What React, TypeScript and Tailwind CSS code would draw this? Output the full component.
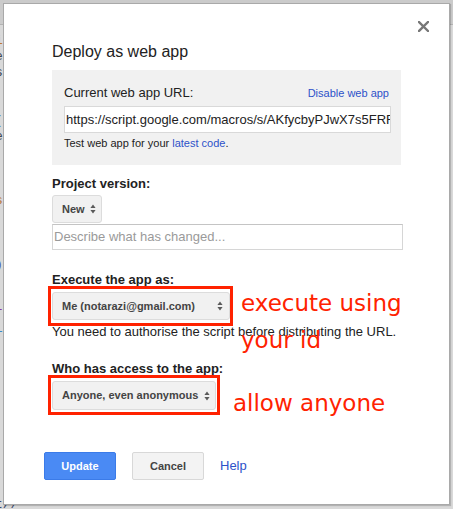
import React from "react";

const Arrows = () => (
  <svg width="6" height="10" viewBox="0 0 6 10" className="shrink-0">
    <path d="M3 0.5L5.6 4H0.4z M0.4 6H5.6L3 9.5z" fill="#5a5a5a" />
  </svg>
);

const codeLines: { t: string; c: string }[] = [
  { t: "i", c: "text-[#c0782e]" },
  { t: "e", c: "text-[#3a4450]" },
  { t: "s", c: "text-[#3a4450]" },
  { t: "", c: "" },
  { t: "", c: "" },
  { t: "(", c: "text-[#3a5a9a]" },
  { t: "e", c: "text-[#3a4450]" },
  { t: "", c: "" },
  { t: "", c: "" },
  { t: "", c: "" },
  { t: "s", c: "text-[#b8763a]" },
  { t: "", c: "" },
  { t: "", c: "" },
  { t: "", c: "" },
  { t: ")", c: "text-[#4a4aa8]" },
  { t: "", c: "" },
  { t: "", c: "" },
  { t: "r", c: "text-[#8a3aa8]" },
  { t: "L", c: "text-[#3a8ac8]" },
  { t: "", c: "" },
  { t: "", c: "" },
  { t: "", c: "" },
  { t: "", c: "" },
  { t: "", c: "" },
  { t: "", c: "" },
  { t: "", c: "" },
  { t: "", c: "" },
  { t: "", c: "" },
  { t: "", c: "" },
  { t: "t//", c: "text-[#3a4a70]" },
];

export default function App() {
  return (
    <div className="relative w-[453px] h-[509px] overflow-hidden bg-[#d9d9d9] font-['Liberation_Sans',Arial,sans-serif]">
      {/* page behind the dialog */}
      <div className="flex flex-col">
        <div className="h-[25px] bg-[#cbcbcb] border-b border-[#b3b3b3]" />
        <div className="flex flex-col pt-[8px] font-['Liberation_Mono',monospace] text-[13px] leading-[16px]">
          {codeLines.map((l, i) => (
            <div key={i} className={`h-[16px] -ml-[5px] whitespace-pre ${l.c}`}>
              {l.t}
            </div>
          ))}
        </div>
      </div>

      {/* dialog */}
      <div className="absolute left-[3px] top-[3px] w-[447px] h-[502px] bg-white border border-[#a9a9a9] shadow-[1px_1px_1px_rgba(0,0,0,0.18)] pl-[48px] pr-[46px] pt-[38px] text-[#222]">
        {/* close */}
        <svg
          className="absolute right-[20px] top-[17px]"
          width="11"
          height="11"
          viewBox="0 0 11 11"
        >
          <path d="M1 1L10 10M10 1L1 10" stroke="#777" strokeWidth="2.4" strokeLinecap="square" />
        </svg>

        <div className="text-[16px] leading-[20px] text-[#222]">Deploy as web app</div>

        <div className="mt-[8px] w-[349px] bg-[#f1f1f1] pl-[12px] pr-[12px] pt-[15px] pb-[15px]">
          <div className="flex items-baseline justify-between">
            <span className="text-[13px] leading-[15px] text-[#222]">Current web app URL:</span>
            <span className="text-[11px] leading-[15px] text-[#2d52c9]">Disable web app</span>
          </div>
          <div className="mt-[5px] w-[327px] h-[27px] bg-white border border-[#d9d9d9] pl-[1px] flex items-center overflow-hidden">
            <span className="text-[13px] whitespace-nowrap text-[#222]">
              https://script.google.com/macros/s/AKfycbyPJwX7s5FRRq0
            </span>
          </div>
          <div className="mt-[3px] text-[11px] leading-[14px] text-[#222]">
            Test web app for your <span className="text-[#2d52c9]">latest code</span>.
          </div>
        </div>

        <div className="mt-[11px] text-[13px] leading-[15px] font-bold text-[#222]">Project version:</div>
        <div className="mt-[4px] inline-flex h-[28px] items-center gap-[5px] pl-[9px] pr-[5px] bg-[#f1f1f1] border border-[#dcdcdc] rounded-[3px]">
          <span className="text-[11px] font-bold text-[#444]">New</span>
          <Arrows />
        </div>
        <div className="mt-[1px] w-[351px] h-[26px] border border-[#d6d6d6] border-t-[#c4c4c4] pl-[1px] flex items-center">
          <span className="text-[13px] text-[#9a9a9a]">Describe what has changed...</span>
        </div>

        <div className="mt-[22px] text-[13px] leading-[15px] font-bold text-[#222]">Execute the app as:</div>
        <div className="relative mt-[5px] w-[178px]">
          <div className="h-[28px] flex items-center justify-between pl-[9px] pr-[6px] bg-[#f1f1f1] border border-[#dcdcdc] rounded-[3px]">
            <span className="text-[11px] font-bold text-[#444]">Me (notarazi@gmail.com)</span>
            <Arrows />
          </div>
          <div className="absolute -left-[4px] -top-[6px] -right-[3px] -bottom-[6px] border-[3px] border-[#ff2200]" />
        </div>
        <div className="mt-[4px] text-[13px] leading-[15px] text-[#222] whitespace-nowrap">
          You need to authorise the script before distributing the URL.
        </div>

        <div className="mt-[22px] text-[13px] leading-[15px] font-bold text-[#222]">Who has access to the app:</div>
        <div className="relative mt-[5px] w-[164px]">
          <div className="h-[29px] flex items-center justify-between pl-[9px] pr-[5px] bg-[#f1f1f1] border border-[#dcdcdc] rounded-[3px]">
            <span className="text-[11px] font-bold text-[#444] whitespace-nowrap">Anyone, even anonymous</span>
            <Arrows />
          </div>
          <div className="absolute -left-[4px] -top-[6px] -right-[4px] -bottom-[5px] border-[3px] border-[#ff2200]" />
        </div>

        <div className="mt-[42px] -ml-[8px] flex items-center gap-[16px]">
          <div className="w-[72px] h-[28px] flex items-center justify-center rounded-[2px] bg-[#4a8af4] border border-[#3b7be8] text-white text-[11px] font-bold">
            Update
          </div>
          <div className="w-[72px] h-[28px] flex items-center justify-center rounded-[2px] bg-[#f3f3f3] border border-[#d8d8d8] text-[#444] text-[11px] font-bold">
            Cancel
          </div>
          <span className="text-[13px] text-[#2d52c9]">Help</span>
        </div>

        {/* annotations */}
        <div className="absolute left-[237px] top-[281px] font-['DejaVu_Sans',sans-serif] text-[23px] leading-[37px] text-[#ff2200] whitespace-nowrap">
          execute using
          <br />
          your id
        </div>
        <div className="absolute left-[229px] top-[381px] font-['DejaVu_Sans',sans-serif] text-[23px] leading-[37px] text-[#ff2200] whitespace-nowrap">
          allow anyone
        </div>
      </div>
    </div>
  );
}
